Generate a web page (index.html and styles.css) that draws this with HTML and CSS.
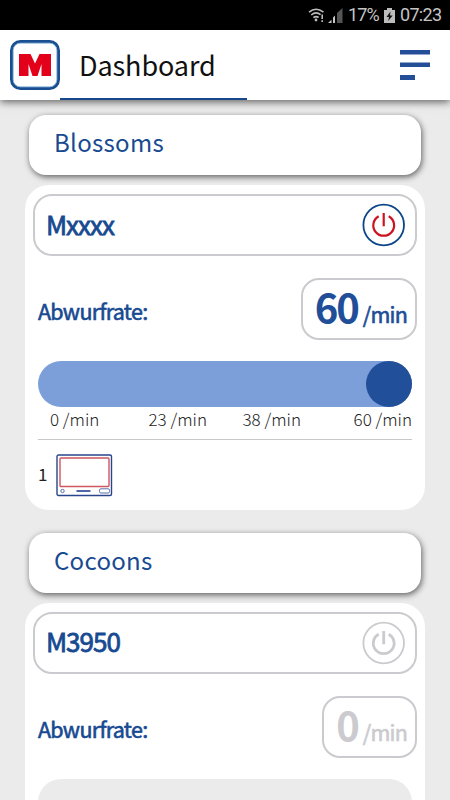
FILE: index.html
```html
<!DOCTYPE html>
<html lang="de">
  <head>
    <meta charset="UTF-8" />
    <meta name="viewport" content="width=device-width, initial-scale=1" />
    <title>Dashboard</title>
    <link rel="stylesheet" href="styles.css">
  </head>
  <body>
    <div class="statusbar">
      <svg class="wifi" width="17" height="15" viewBox="0 0 17 15">
        <g fill="none" stroke="#bdbdbd" stroke-width="1.6">
          <path d="M1 4.2Q8 -1.6 15.5 4.2" />
          <path d="M3.2 7Q8 3 12.6 6.6" />
          <path d="M5.4 9.7Q8 7.6 10.6 9.5" />
          <path d="M14.2 6.5V11M14.2 12.3V14" />
        </g>
        <circle cx="8" cy="12" r="1.4" fill="#bdbdbd" />
      </svg>
      <svg class="signal" width="16" height="15" viewBox="0 0 16 15">
        <path d="M9 5L14.5 0V15H9Z" fill="#555" />
        <path d="M5 9.5L7 7.5V15H5ZM0 15L3.5 11.8V15Z" fill="#c8c8c8" />
      </svg>
      <span class="percent">17%</span>
      <svg class="battery" width="11" height="15" viewBox="0 0 11 15">
        <path d="M3 0H8V2H11V15H0V2H3Z" fill="#bdbdbd" />
        <path d="M6.5 3.6L2.5 9H5L4.2 13L8.7 7.4H6Z" fill="#111" />
      </svg>
      <span class="clock">07:23</span>
    </div>

    <header class="header">
      <svg class="logo" width="50" height="50" viewBox="0 0 50 50">
        <rect x="1.5" y="1.5" width="47" height="47" rx="9" fill="#fff" stroke="#194f91" stroke-width="3" />
        <rect x="3.2" y="3.2" width="43.6" height="43.6" rx="7" fill="none" stroke="#8fb6da" stroke-width="1" />
        <path d="M9 14H20.5L25 23.5L29.5 14H41V36H31.5V24L27.5 36H22.5L18.5 24V36H9Z" fill="#e2001a" />
      </svg>
      <h1 class="title">Dashboard</h1>
      <svg class="menu" width="30" height="30" viewBox="0 0 30 30">
        <path d="M0 0H30V4.5H0ZM0 12.5H30V17H0ZM0 25H15V30H0Z" fill="#244f98" />
      </svg>
    </header>

    <main class="content">
      <h2 class="group">Blossoms</h2>
      <section class="panel">
        <div class="device">
          <span class="name">Mxxxx</span>
          <svg class="power" width="44" height="44" viewBox="0 0 44 44">
            <circle class="ring" cx="21.7" cy="22" r="20.3" />
            <path class="sign" d="M16.7 13.2A10.4 10.4 0 1 0 26.7 13.2M21.7 10V23.3" />
          </svg>
        </div>
        <div class="rate">
          <span class="label">Abwurfrate:</span>
          <div class="value"><span class="number">60</span><span class="unit">/min</span></div>
        </div>
        <div class="slider"><div class="thumb"></div></div>
        <div class="scale">
          <span>0 /min</span>
          <span>23 /min</span>
          <span>38 /min</span>
          <span>60 /min</span>
        </div>
        <div class="units">
          <span class="count">1</span>
          <svg width="57" height="43" viewBox="0 0 57 43">
            <rect x="1" y="1" width="54.5" height="40.5" rx="1.5" fill="#fff" stroke="#29468c" stroke-width="1.4" />
            <rect x="4" y="4" width="49" height="28.5" rx="1" fill="none" stroke="#cf5560" stroke-width="1.4" />
            <circle cx="6.5" cy="37" r="1.7" fill="none" stroke="#5a72a8" />
            <path d="M20.5 37H34.5" stroke="#4d68a5" stroke-width="2" />
            <rect x="43.5" y="34.8" width="10" height="4.2" rx="1.4" fill="none" stroke="#5a72a8" />
          </svg>
        </div>
      </section>

      <h2 class="group">Cocoons</h2>
      <section class="panel off">
        <div class="device">
          <span class="name">M3950</span>
          <svg class="power" width="44" height="44" viewBox="0 0 44 44">
            <circle class="ring" cx="21.7" cy="22" r="20.3" />
            <path class="sign" d="M16.7 13.2A10.4 10.4 0 1 0 26.7 13.2M21.7 10V23.3" />
          </svg>
        </div>
        <div class="rate">
          <span class="label">Abwurfrate:</span>
          <div class="value"><span class="number">0</span><span class="unit">/min</span></div>
        </div>
        <div class="slider"></div>
      </section>
    </main>
  </body>
</html>
```

FILE: styles.css
```css
* {
  box-sizing: border-box;
}

body {
  margin: 0;
  height: 800px;
  overflow: hidden;
  display: flex;
  flex-direction: column;
  background: #ebebeb;
  color: #174a91;
  font-family: "Noto Sans CJK SC", "Noto Sans", sans-serif;
}

svg {
  display: block;
  flex: none;
}

.statusbar {
  flex: none;
  height: 30px;
  padding-right: 9px;
  display: flex;
  align-items: center;
  justify-content: flex-end;
  background: #000;
  color: #c4c4c4;
  font-family: Roboto, sans-serif;
  font-size: 18px;
  line-height: 30px;
}

.signal {
  margin: 0 4px 0 3px;
}

.battery {
  margin: 0 5px 0 5px;
}

.percent {
  width: 31px;
  letter-spacing: -0.9px;
}

.clock {
  width: 41px;
  letter-spacing: -0.7px;
}

.header {
  flex: none;
  height: 70px;
  padding: 0 20px 0 10px;
  display: flex;
  align-items: center;
  background: #fff;
  box-shadow: 0 2px 8px rgba(0, 0, 0, 0.6);
}

.title {
  width: 187px;
  height: 70px;
  margin: 0;
  padding-left: 19px;
  border-bottom: 2px solid #17488c;
  color: #111;
  font-size: 27px;
  font-weight: 400;
  line-height: 69px;
  letter-spacing: -0.1px;
}

.menu {
  margin-left: auto;
}

.content {
  padding: 15px 25px 0;
}

.group {
  height: 60px;
  margin: 0 4px 10px;
  padding-left: 25px;
  border-radius: 17px;
  background: #fff;
  box-shadow: 1px 2px 6px rgba(0, 0, 0, 0.6);
  font-size: 24px;
  font-weight: 400;
  line-height: 54px;
  letter-spacing: 0.3px;
}

.panel {
  height: 325px;
  margin-bottom: 22.5px;
  padding: 9px 8px 0;
  border-radius: 24px;
  background: #fff;
}

.device {
  height: 62px;
  padding: 0 9px 0 11px;
  display: flex;
  align-items: center;
  justify-content: space-between;
  border: 2px solid #cbcbcf;
  border-radius: 19px;
}

.name {
  padding-bottom: 4px;
  font-size: 26px;
  letter-spacing: -1px;
  -webkit-text-stroke: 0.8px;
}

.power {
  fill: none;
}

.ring {
  stroke: #0b468a;
  stroke-width: 1.8;
}

.sign {
  stroke: #cc1421;
  stroke-width: 2.2;
}

.rate {
  margin-top: 22px;
  padding-left: 5px;
  display: flex;
  align-items: center;
  justify-content: space-between;
}

.label {
  padding-top: 3px;
  font-size: 21.5px;
  letter-spacing: -0.7px;
  -webkit-text-stroke: 0.6px;
}

.value {
  height: 62px;
  padding: 0 8px 0 12px;
  display: flex;
  align-items: baseline;
  gap: 5px;
  border: 2px solid #cbcbcf;
  border-radius: 18px;
  color: #214e98;
  line-height: 53px;
}

.number {
  font-size: 40px;
  font-weight: 700;
  letter-spacing: -2px;
}

.unit {
  font-size: 21.5px;
  letter-spacing: -0.8px;
  -webkit-text-stroke: 0.6px;
}

.slider {
  height: 46px;
  margin: 21px 5px 0;
  display: flex;
  justify-content: flex-end;
  border-radius: 23px;
  background: #7c9fd9;
}

.thumb {
  width: 46px;
  border-radius: 50%;
  background: #224f99;
}

.scale {
  height: 33px;
  margin: 0 5px;
  padding-left: 12px;
  display: grid;
  grid-template-columns: 98.5px 94px 1fr auto;
  border-bottom: 1px solid #c8c8c8;
  color: #222;
  font-size: 17px;
  font-weight: 300;
  line-height: 24px;
}

.units {
  height: 71px;
  padding-left: 5px;
  display: flex;
  align-items: center;
  gap: 9px;
  color: #222;
  font-size: 17px;
}

.count {
  padding-bottom: 4px;
}

/* switched off device */
.off .ring,
.off .sign {
  stroke: #cbcbcf;
}

.off .sign {
  stroke-width: 2.8;
}

.off .value {
  color: #cbcbcf;
}

.off .slider {
  background: #ebebeb;
}
```
